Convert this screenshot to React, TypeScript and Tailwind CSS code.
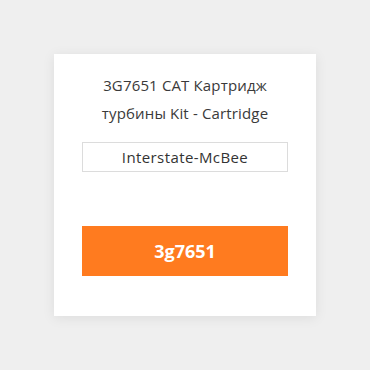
export default function App() {
  return (
    <div className="flex min-h-[370px] w-full items-center justify-center bg-[#efefef] font-['Open_Sans',sans-serif]">
      <div className="flex w-[262px] flex-col items-stretch bg-white px-[28px] pt-[17px] pb-[40px] shadow-[0_2px_12px_rgba(0,0,0,0.08)]">
        <h3 className="px-1 text-center text-[15px] leading-[28px] font-normal tracking-[0.15px] text-[#3a3a3a]">
          3G7651 CAT Картридж турбины Kit - Cartridge
        </h3>
        <div className="mt-[15px] flex h-[30px] items-center justify-center border border-[#dcdcdc] text-[15px] tracking-[0.4px] text-[#333]">
          Interstate-McBee
        </div>
        <button className="mt-[54px] flex h-[50px] items-center justify-center bg-[#ff7b1f] text-[18px] font-bold text-white">
          3g7651
        </button>
      </div>
    </div>
  );
}
